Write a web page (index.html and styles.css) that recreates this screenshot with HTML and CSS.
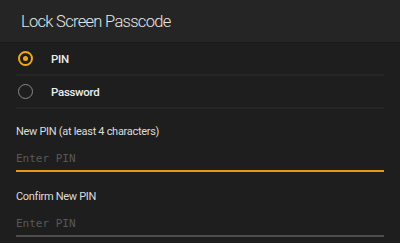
FILE: index.html
```html
<!DOCTYPE html>
<html>
<head>
<meta charset="utf-8">
<link rel="stylesheet" href="styles.css">
</head>
<body>
<header class="bar"><h1 class="title">Lock Screen Passcode</h1></header>
<main class="content">
  <div class="radio-row">
    <span class="radio checked"><span class="dot"></span></span>
    <span class="radio-label">PIN</span>
  </div>
  <div class="radio-row">
    <span class="radio"></span>
    <span class="radio-label">Password</span>
  </div>
  <div class="field">
    <label class="field-label">New PIN (at least 4 characters)</label>
    <div class="input active">Enter PIN</div>
  </div>
  <div class="field second">
    <label class="field-label">Confirm New PIN</label>
    <div class="input">Enter PIN</div>
  </div>
</main>
</body>
</html>
```
FILE: styles.css
```css
html, body {
  margin: 0;
  padding: 0;
  background: #1e1e1e;
  width: 400px;
  height: 243px;
  overflow: hidden;
  font-family: Roboto, "Noto Sans", sans-serif;
}
.bar {
  height: 42px;
  background: #252525;
  border-bottom: 1px solid #1a1a1a;
  display: flex;
  align-items: center;
  padding-left: 21px;
}
.title {
  margin: 0;
  font-size: 16.5px;
  font-weight: 300;
  color: #e6e6e6;
  letter-spacing: -0.7px;
}
.content {
  margin: 0 16px;
  display: flex;
  flex-direction: column;
}
.radio-row {
  height: 31px;
  display: flex;
  align-items: center;
  border-bottom: 2px solid #262626;
}
.radio {
  box-sizing: border-box;
  width: 15px;
  height: 15px;
  border-radius: 50%;
  border: 1.5px solid #8a8a8a;
  margin-left: 2px;
  display: flex;
  align-items: center;
  justify-content: center;
}
.radio.checked {
  border: 2px solid #f3a712;
}
.dot {
  width: 5px;
  height: 5px;
  border-radius: 50%;
  background: #f3a712;
}
.radio-label {
  margin-left: 18px;
  font-size: 11.5px;
  font-weight: 500;
  color: #ececec;
  letter-spacing: -0.3px;
}
.field {
  display: flex;
  flex-direction: column;
}
.field-label {
  margin-top: 16px;
  font-size: 11px;
  color: #dcdcdc;
  line-height: 13px;
  letter-spacing: -0.3px;
}
.second .field-label {
  margin-top: 18px;
}
.input {
  margin-top: 14px;
  font-family: "DejaVu Sans Mono", "Liberation Mono", monospace;
  font-size: 11px;
  line-height: 13px;
  color: #585858;
  padding-bottom: 5px;
  border-bottom: 2px solid #4e4e4e;
}
.input.active {
  border-bottom-color: #e8990f;
}
```
